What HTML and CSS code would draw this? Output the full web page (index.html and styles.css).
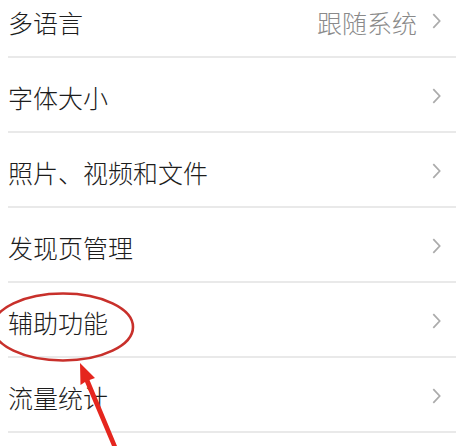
FILE: index.html
```html
<!DOCTYPE html>
<html lang="zh-CN">
<head>
<meta charset="utf-8">
<title>设置</title>
<link rel="stylesheet" href="styles.css">
</head>
<body>
<div class="page">
  <ul class="list">
    <li class="row"><span class="label">多语言</span><span class="value">跟随系统</span><svg class="chev" viewBox="0 0 8 15"><path d="M1 1 L7 7.5 L1 14"/></svg></li>
    <li class="row"><span class="label">字体大小</span><svg class="chev" viewBox="0 0 8 15"><path d="M1 1 L7 7.5 L1 14"/></svg></li>
    <li class="row"><span class="label">照片、视频和文件</span><svg class="chev" viewBox="0 0 8 15"><path d="M1 1 L7 7.5 L1 14"/></svg></li>
    <li class="row"><span class="label">发现页管理</span><svg class="chev" viewBox="0 0 8 15"><path d="M1 1 L7 7.5 L1 14"/></svg></li>
    <li class="row"><span class="label">辅助功能</span><svg class="chev" viewBox="0 0 8 15"><path d="M1 1 L7 7.5 L1 14"/></svg></li>
    <li class="row"><span class="label">流量统计</span><svg class="chev" viewBox="0 0 8 15"><path d="M1 1 L7 7.5 L1 14"/></svg></li>
  </ul>
  <svg class="annot" viewBox="0 0 456 446" width="456" height="446">
    <ellipse cx="63" cy="327" rx="70" ry="33.5" fill="none" stroke="#c8302b" stroke-width="2.6"/>
    <polygon points="80,363 95,378 89.5,380 117,446 112,446 85,382 80.5,385" fill="#e5261e"/>
  </svg>
</div>
</body>
</html>
```
FILE: styles.css
```css
html, body {
  margin: 0;
  padding: 0;
  background: #ffffff;
}
.page {
  position: relative;
  width: 456px;
  height: 446px;
  overflow: hidden;
  font-family: "Noto Sans CJK SC", "Noto Sans", sans-serif;
}
.list {
  list-style: none;
  margin: -17px 0 0 0;
  padding: 0 0 0 8px;
}
.row {
  display: flex;
  align-items: center;
  box-sizing: border-box;
  height: 75px;
  padding-top: 6px;
  padding-right: 15px;
  border-bottom: 2px solid #e9e9e9;
}
.label {
  flex: 1;
  font-size: 25px;
  font-weight: 300;
  color: #1c1c1c;
  line-height: 1;
}
.value {
  font-size: 25px;
  font-weight: 300;
  color: #8a8a8a;
  line-height: 1;
  margin-right: 15px;
}
.chev {
  width: 9px;
  height: 16px;
  margin-top: -4px;
}
.chev path {
  fill: none;
  stroke: #ababab;
  stroke-width: 1.6;
}
.annot {
  position: absolute;
  left: 0;
  top: 0;
}
```
